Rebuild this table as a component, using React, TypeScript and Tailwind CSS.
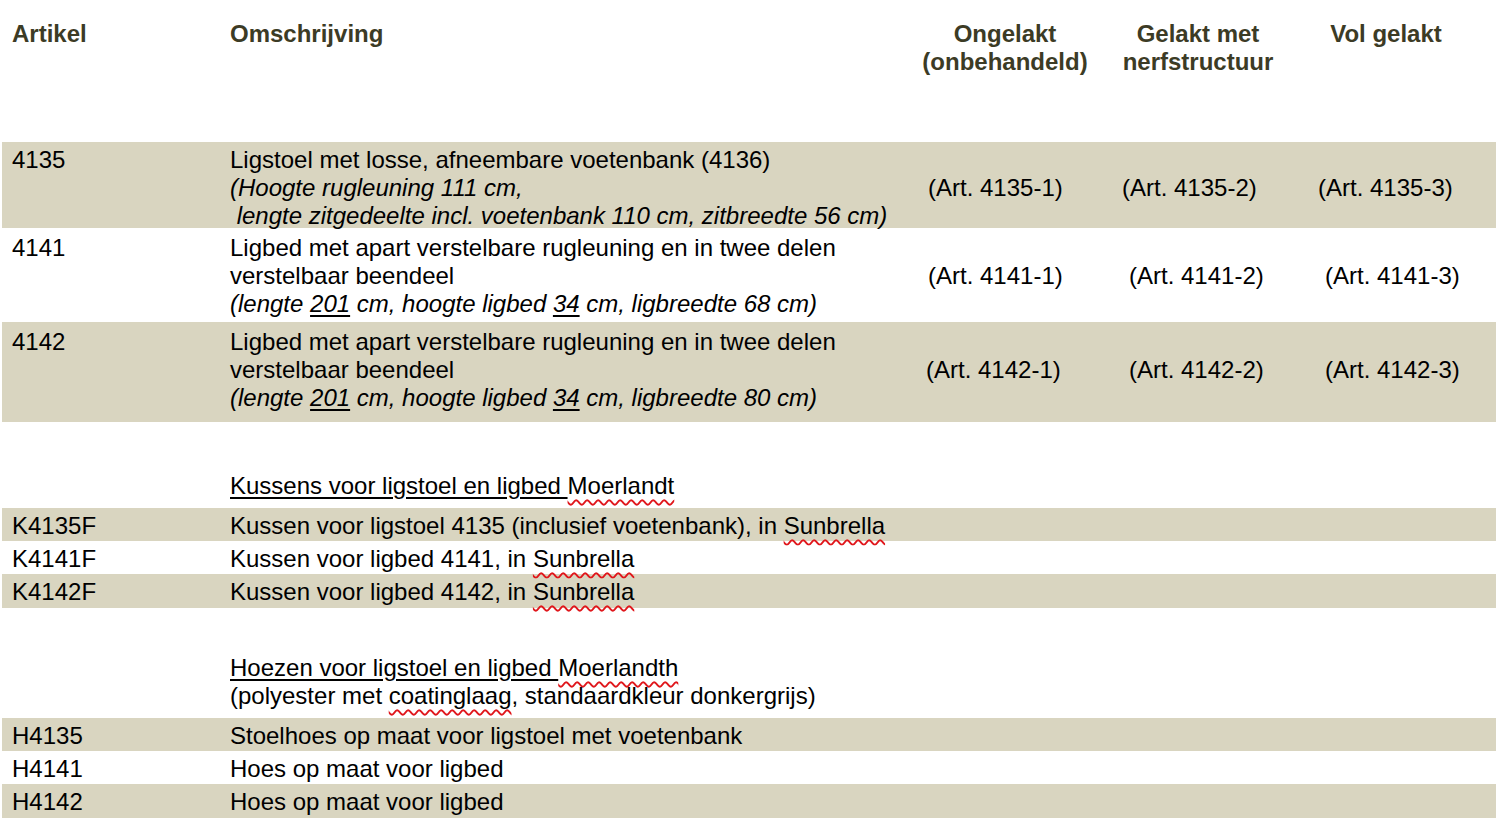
import React from "react";

const BAND = "bg-[#d9d5c0]";
const COLS = "grid grid-cols-[228px_680px_190px_196px_180px]";

function Wavy({ children }: { children: React.ReactNode }) {
  return (
    <span className="underline decoration-wavy decoration-[#e0161b] decoration-[1.5px] underline-offset-[5px]">
      {children}
    </span>
  );
}

function Art({ value, ml }: { value: string; ml: string }) {
  return <div className={`mt-[28px] whitespace-nowrap ${ml}`}>{value}</div>;
}

function BigRow({
  code,
  band,
  height,
  pt,
  lines,
  arts,
}: {
  code: string;
  band?: boolean;
  height: string;
  pt: string;
  lines: React.ReactNode;
  arts: [string, string][];
}) {
  return (
    <div className={`${COLS} ${height} ${pt} ${band ? BAND : ""}`}>
      <div className="pl-[10px]">{code}</div>
      <div>{lines}</div>
      {arts.map(([v, ml]) => (
        <Art key={v} value={v} ml={ml} />
      ))}
    </div>
  );
}

function SmallRow({ code, text, band, height }: { code: string; text: React.ReactNode; band?: boolean; height: string }) {
  return (
    <div className={`${COLS} ${height} items-center pt-[2px] ${band ? BAND : ""}`}>
      <div className="pl-[10px]">{code}</div>
      <div className="col-span-4 whitespace-nowrap">{text}</div>
    </div>
  );
}

export default function App() {
  return (
    <div
      className="min-h-[824px] w-[1496px] bg-white pl-[2px] text-[24px] leading-[28px] text-black"
      style={{ fontFamily: '"Liberation Sans", Arial, sans-serif' }}
    >
      {/* Header */}
      <div className={`${COLS} h-[142px] pt-[20px] font-bold text-[#3c3b25]`}>
        <div className="pl-[10px]">Artikel</div>
        <div>Omschrijving</div>
        <div className="text-center">
          Ongelakt
          <br />
          (onbehandeld)
        </div>
        <div className="text-center">
          Gelakt met
          <br />
          nerfstructuur
        </div>
        <div className="text-center">Vol gelakt</div>
      </div>

      <BigRow
        code="4135"
        band
        height="h-[86px]"
        pt="pt-[4px]"
        lines={
          <>
            <div className="whitespace-nowrap">Ligstoel met losse, afneembare voetenbank (4136)</div>
            <div className="whitespace-pre italic">(Hoogte rugleuning 111 cm,</div>
            <div className="whitespace-pre italic"> lengte zitgedeelte incl. voetenbank 110 cm, zitbreedte 56 cm)</div>
          </>
        }
        arts={[
          ["(Art. 4135-1)", "ml-[18px]"],
          ["(Art. 4135-2)", "ml-[22px]"],
          ["(Art. 4135-3)", "ml-[22px]"],
        ]}
      />

      <BigRow
        code="4141"
        height="h-[94px]"
        pt="pt-[6px]"
        lines={
          <>
            <div className="whitespace-nowrap">Ligbed met apart verstelbare rugleuning en in twee delen</div>
            <div>verstelbaar beendeel</div>
            <div className="whitespace-nowrap italic">
              (lengte <span className="underline underline-offset-[3px]">201</span> cm, hoogte ligbed{" "}
              <span className="underline underline-offset-[3px]">34</span> cm, ligbreedte 68 cm)
            </div>
          </>
        }
        arts={[
          ["(Art. 4141-1)", "ml-[18px]"],
          ["(Art. 4141-2)", "ml-[29px]"],
          ["(Art. 4141-3)", "ml-[29px]"],
        ]}
      />

      <BigRow
        code="4142"
        band
        height="h-[100px]"
        pt="pt-[6px]"
        lines={
          <>
            <div className="whitespace-nowrap">Ligbed met apart verstelbare rugleuning en in twee delen</div>
            <div>verstelbaar beendeel</div>
            <div className="whitespace-nowrap italic">
              (lengte <span className="underline underline-offset-[3px]">201</span> cm, hoogte ligbed{" "}
              <span className="underline underline-offset-[3px]">34</span> cm, ligbreedte 80 cm)
            </div>
          </>
        }
        arts={[
          ["(Art. 4142-1)", "ml-[16px]"],
          ["(Art. 4142-2)", "ml-[29px]"],
          ["(Art. 4142-3)", "ml-[29px]"],
        ]}
      />

      {/* Kussens */}
      <div className={`${COLS} pt-[50px] pb-[8px]`}>
        <div />
        <div className="col-span-4 whitespace-nowrap">
          <span className="underline underline-offset-[3px]">Kussens voor ligstoel en ligbed </span>
          <Wavy>Moerlandt</Wavy>
        </div>
      </div>
      <SmallRow code="K4135F" band height="h-[33px]" text={<>Kussen voor ligstoel 4135 (inclusief voetenbank), in <Wavy>Sunbrella</Wavy></>} />
      <SmallRow code="K4141F" height="h-[33px]" text={<>Kussen voor ligbed 4141, in <Wavy>Sunbrella</Wavy></>} />
      <SmallRow code="K4142F" band height="h-[34px]" text={<>Kussen voor ligbed 4142, in <Wavy>Sunbrella</Wavy></>} />

      {/* Hoezen */}
      <div className={`${COLS} pt-[46px] pb-[8px]`}>
        <div />
        <div className="col-span-4 whitespace-nowrap">
          <div>
            <span className="underline underline-offset-[3px]">Hoezen voor ligstoel en ligbed </span>
            <Wavy>Moerlandth</Wavy>
          </div>
          <div>
            (polyester met <Wavy>coatinglaag</Wavy>, standaardkleur donkergrijs)
          </div>
        </div>
      </div>
      <SmallRow code="H4135" band height="h-[33px]" text="Stoelhoes op maat voor ligstoel met voetenbank" />
      <SmallRow code="H4141" height="h-[33px]" text="Hoes op maat voor ligbed" />
      <SmallRow code="H4142" band height="h-[34px]" text="Hoes op maat voor ligbed" />
    </div>
  );
}
